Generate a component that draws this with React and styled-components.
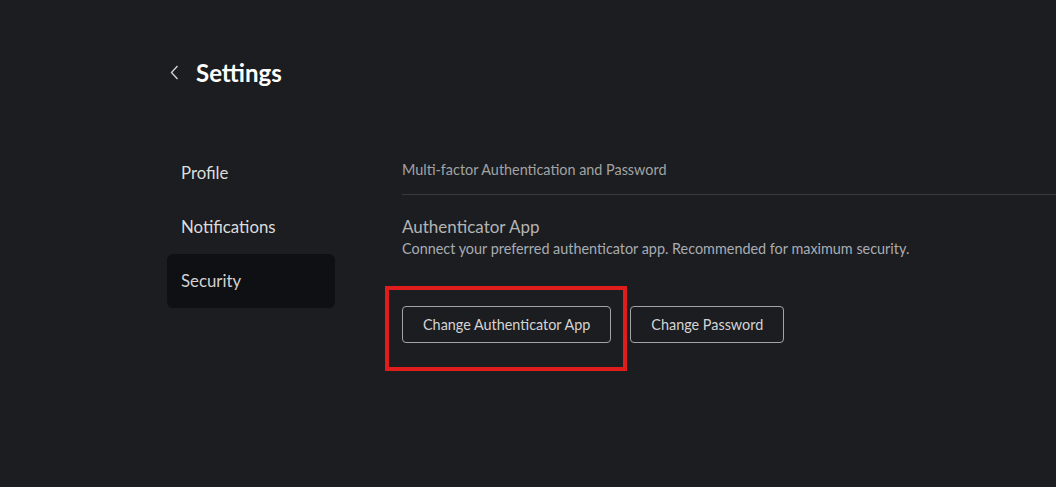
import React from "react";
import styled, { createGlobalStyle } from "styled-components";

const Global = createGlobalStyle`
  html, body { margin: 0; padding: 0; background: #1b1d21; }
  body { font-family: Lato, "Open Sans", sans-serif; color: #d6d6d6; }
  * { box-sizing: border-box; }
`;

const Page = styled.div`
  min-height: 487px;
  padding: 56px 0 0 167px;
`;

const Header = styled.div`
  display: flex;
  align-items: center;
  gap: 17px;
  height: 32px;
`;

const Back = styled.button`
  background: none;
  border: none;
  padding: 0 0 0 3px;
  display: flex;
  align-items: center;
  cursor: pointer;
  color: #d0d0d0;
`;

const Title = styled.h1`
  margin: 0;
  font-size: 24px;
  font-weight: 700;
  color: #ffffff;
  letter-spacing: 0;
`;

const Main = styled.div`
  display: flex;
  gap: 67px;
  margin-top: 58px;
`;

const Sidebar = styled.nav`
  width: 168px;
  flex-shrink: 0;
  display: flex;
  flex-direction: column;
`;

const NavItem = styled.div`
  height: 54px;
  display: flex;
  align-items: center;
  padding-left: 14px;
  padding-bottom: 1px;
  font-size: 16.8px;
  color: ${(p) => (p.$active ? "#d2d2d2" : "#dcdcdc")};
  background: ${(p) => (p.$active ? "#0e1014" : "transparent")};
  border-radius: 6px;
`;

const Content = styled.section`
  flex: 1;
  display: flex;
  flex-direction: column;
`;

const SectionHead = styled.div`
  font-size: 14.4px;
  color: #a3a3a3;
  padding: 15px 0 16px;
  border-bottom: 1px solid #383a3e;
  line-height: 17px;
`;

const BlockTitle = styled.div`
  margin-top: 22px;
  font-size: 17px;
  color: #b4b4b4;
  line-height: 20px;
`;

const BlockDesc = styled.div`
  margin-top: 3px;
  font-size: 14.4px;
  color: #a8acb3;
  line-height: 17px;
`;

const Buttons = styled.div`
  display: flex;
  gap: 19px;
  margin-top: 49px;
`;

const HighlightWrap = styled.div`
  position: relative;
`;

const Highlight = styled.div`
  position: absolute;
  left: -17px;
  top: -20px;
  width: 242px;
  height: 85px;
  border: 4px solid #e01c1c;
  pointer-events: none;
`;

const Button = styled.button`
  height: 37px;
  padding: 0 20px;
  background: transparent;
  border: 1px solid #a4a4a4;
  border-radius: 4px;
  color: #d4d4d4;
  font-family: Lato, sans-serif;
  font-size: 14.4px;
  cursor: pointer;
`;

export default function App() {
  return (
    <>
      <Global />
      <Page>
        <Header>
          <Back aria-label="Back">
            <svg width="9" height="15" viewBox="0 0 9 15" fill="none">
              <path d="M7.5 1 L1.5 7.5 L7.5 14" stroke="currentColor" strokeWidth="1.4" />
            </svg>
          </Back>
          <Title>Settings</Title>
        </Header>
        <Main>
          <Sidebar>
            <NavItem>Profile</NavItem>
            <NavItem>Notifications</NavItem>
            <NavItem $active>Security</NavItem>
          </Sidebar>
          <Content>
            <SectionHead>Multi-factor Authentication and Password</SectionHead>
            <BlockTitle>Authenticator App</BlockTitle>
            <BlockDesc>Connect your preferred authenticator app. Recommended for maximum security.</BlockDesc>
            <Buttons>
              <HighlightWrap>
                <Button>Change Authenticator App</Button>
                <Highlight />
              </HighlightWrap>
              <Button>Change Password</Button>
            </Buttons>
          </Content>
        </Main>
      </Page>
    </>
  );
}
